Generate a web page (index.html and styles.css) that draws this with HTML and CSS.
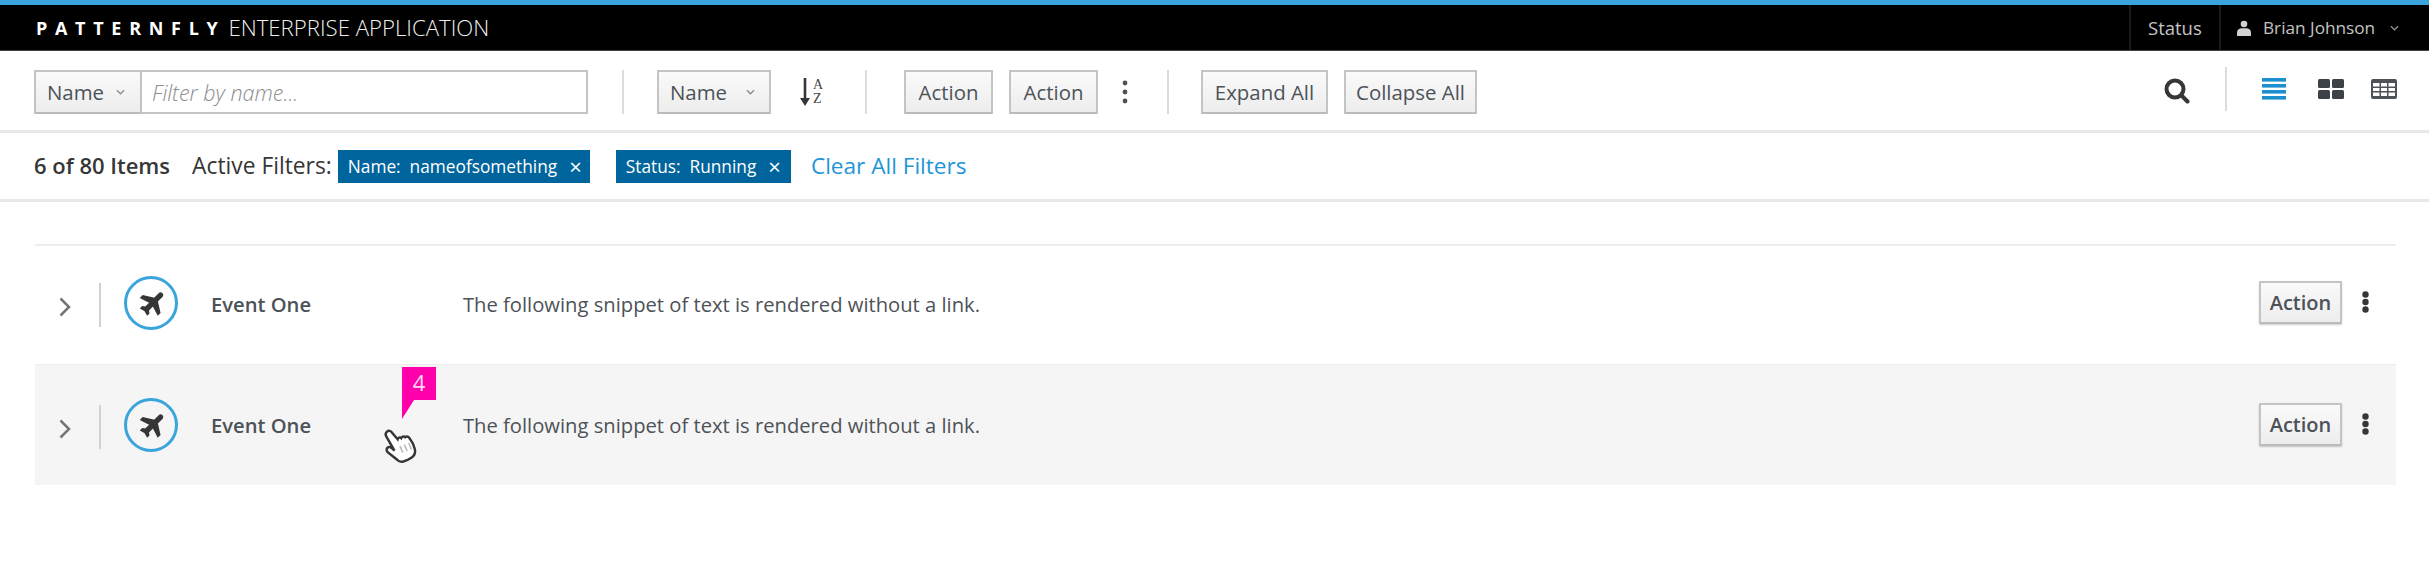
FILE: index.html
```html
<!DOCTYPE html>
<html lang="en">
<head>
<meta charset="utf-8">
<title>Patternfly Enterprise Application</title>
<link rel="stylesheet" href="styles.css">
</head>
<body>
<header class="masthead">
  <div class="brand"><span class="brand-name">PATTERNFLY</span><span class="brand-app">ENTERPRISE APPLICATION</span></div>
  <nav class="util">
    <span class="util-status">Status</span>
    <span class="util-user">
      <svg class="user-icon" viewBox="0 0 14 16"><circle cx="7" cy="4" r="3.300"/><path d="M0 16v-3.500C0 10 2 8.500 4 8.200h6c2 .3 4 1.800 4 4.300V16z"/></svg>
      <span class="user-name">Brian Johnson</span>
      <svg class="chev-down chev-light" viewBox="0 0 10 6"><path d="M1 1l4 4 4-4"/></svg>
    </span>
  </nav>
</header>

<section class="toolbar">
  <div class="filter-group">
    <button class="btn select-btn"><span>Name</span><svg class="chev-down" viewBox="0 0 10 6"><path d="M1 1l4 4 4-4"/></svg></button>
    <input class="filter-input" type="text" placeholder="Filter by name...">
  </div>
  <i class="sep sep-a"></i>
  <button class="btn select-btn sort-select"><span>Name</span><svg class="chev-down" viewBox="0 0 10 6"><path d="M1 1l4 4 4-4"/></svg></button>
  <span class="sort-icon">
    <svg class="sort-arrow" viewBox="0 0 10 28"><path d="M3.700 0h2.600v20H10l-5 8-5-8h3.700z"/></svg>
    <span class="sort-letters"><span>A</span><span>Z</span></span>
  </span>
  <i class="sep sep-b"></i>
  <button class="btn action w-action">Action</button>
  <button class="btn action w-action action-2">Action</button>
  <svg class="kebab kebab-bar" viewBox="0 0 6 24"><circle cx="3" cy="3" r="2.400"/><circle cx="3" cy="12" r="2.400"/><circle cx="3" cy="21" r="2.400"/></svg>
  <i class="sep sep-c"></i>
  <button class="btn action w-expand">Expand All</button>
  <button class="btn action w-collapse action-2">Collapse All</button>
  <div class="toolbar-right">
    <svg class="search-icon" viewBox="0 0 26 26"><circle cx="11" cy="11" r="8.500"/><path d="M17.500 17.500l6 6"/></svg>
    <i class="sep sep-d"></i>
    <svg class="view-icon view-list" viewBox="0 0 24 22"><rect y="0" width="24" height="3.600"/><rect y="6" width="24" height="3.600"/><rect y="12" width="24" height="3.600"/><rect y="18" width="24" height="3.600"/></svg>
    <svg class="view-icon view-grid" viewBox="0 0 26 20"><rect width="12" height="9" rx="1.500"/><rect x="14" width="12" height="9" rx="1.500"/><rect y="11" width="12" height="9" rx="1.500"/><rect x="14" y="11" width="12" height="9" rx="1.500"/></svg>
    <svg class="view-icon view-table" viewBox="0 0 26 20"><path fill-rule="evenodd" d="M2 0h22a2 2 0 0 1 2 2v16a2 2 0 0 1-2 2H2a2 2 0 0 1-2-2V2a2 2 0 0 1 2-2zm0 4v3.500h6.500V4zm8 0v3.500h6V4zm7.500 0v3.500H24V4zM2 9v3h6.500V9zm8 0v3h6V9zm7.500 0v3H24V9zM2 13.500V17h6.500v-3.500zm8 0V17h6v-3.500zm7.500 0V17H24v-3.500z"/></svg>
  </div>
</section>

<section class="filters">
  <strong class="count">6 of 80 Items</strong>
  <span class="active-label">Active Filters:</span>
  <span class="chip chip-1">Name:&nbsp; nameofsomething<b class="chip-x">×</b></span>
  <span class="chip chip-2">Status:&nbsp; Running<b class="chip-x">×</b></span>
  <a class="clear" href="#">Clear All Filters</a>
</section>

<main class="list">
  <div class="row row-first">
    <svg class="chev-right" viewBox="0 0 12 20"><path d="M1.500 1.500L10 10l-8.500 8.500"/></svg>
    <i class="row-sep"></i>
    <span class="plane-circle"><svg class="plane" viewBox="-2 0 24 24"><path transform="rotate(45 12 12)" d="M21 16v-2l-8-5V3.500c0-.83-.67-1.500-1.500-1.500S10 2.670 10 3.500V9l-8 5v2l8-2.500V19l-2 1.500V22l3.500-1 3.500 1v-1.500L13 19v-5.500l8 2.500z"/></svg></span>
    <span class="row-title">Event One</span>
    <span class="row-text">The following snippet of text is rendered without a link.</span>
    <button class="btn row-action">Action</button>
    <svg class="kebab kebab-row" viewBox="0 0 7 22"><circle cx="3.500" cy="3.500" r="3.200"/><circle cx="3.500" cy="11" r="3.200"/><circle cx="3.500" cy="18.500" r="3.200"/></svg>
  </div>
  <div class="row row-hover">
    <svg class="chev-right" viewBox="0 0 12 20"><path d="M1.500 1.500L10 10l-8.500 8.500"/></svg>
    <i class="row-sep"></i>
    <span class="plane-circle"><svg class="plane" viewBox="-2 0 24 24"><path transform="rotate(45 12 12)" d="M21 16v-2l-8-5V3.500c0-.83-.67-1.500-1.500-1.500S10 2.670 10 3.500V9l-8 5v2l8-2.500V19l-2 1.500V22l3.500-1 3.500 1v-1.500L13 19v-5.500l8 2.500z"/></svg></span>
    <span class="row-title">Event One</span>
    <span class="row-text">The following snippet of text is rendered without a link.</span>
    <button class="btn row-action">Action</button>
    <svg class="kebab kebab-row" viewBox="0 0 7 22"><circle cx="3.500" cy="3.500" r="3.200"/><circle cx="3.500" cy="11" r="3.200"/><circle cx="3.500" cy="18.500" r="3.200"/></svg>
    <span class="marker"><span class="marker-num">4</span></span>
    <svg class="hand" viewBox="0 0 34 34"><path d="M6.500 3.200c1.700-1.200 3.500-.4 4.500 1.300l4.400 6.300c.5-1.400 2.300-1.900 3.300-.8.600-1.200 2.500-1.600 3.500-.4.900-.9 2.700-.8 3.500.5 2 3 3.800 7.200 4.300 11 .4 3.400-.8 5.700-3.800 7.300-2.500 1.400-5.100 2.300-7.500 2.700-2.300.3-4-.4-5.300-2.100L5.500 21.500c-1.100-1.500-.9-3.100.2-3.900 1.200-.8 2.800-.4 4 .9l2 2.200L5.600 7.600c-.8-1.700-.5-3.400.9-4.400z"/><path class="hand-lines" d="M17 17l2 6M21 16l2 6M25 15l2 6"/></svg>
  </div>
</main>
</body>
</html>
```

FILE: styles.css
```css
* { box-sizing: border-box; }
html, body { margin: 0; padding: 0; }
body {
  width: 2429px;
  height: 575px;
  background: #fff;
  color: #363636;
  font-family: "Open Sans", "Liberation Sans", sans-serif;
  font-size: 20.200px;
  overflow: hidden;
}
i { display: block; font-style: normal; }

/* masthead */
.masthead {
  height: 51px;
  background: #000;
  border-top: 5px solid #39a5dc;
  border-bottom: 1px solid #444;
  display: flex;
  justify-content: space-between;
  color: #c4c4c4;
}
.brand { display: flex; align-items: center; padding-left: 36px; }
.brand-name { font-weight: 700; font-size: 18px; letter-spacing: 7.700px; color: #fff; }
.brand-app { margin-left: 3px; font-size: 22.200px; font-weight: 300; color: #f0f0f0; }
.util { display: flex; font-size: 18.500px; }
.util-status {
  width: 92px;
  border-left: 2px solid #1a1a1a;
  border-right: 2px solid #1a1a1a;
  display: flex;
  align-items: center;
  padding-left: 17px;
}
.util-user { width: 208px; display: flex; align-items: center; padding-left: 16px; }
.user-icon { width: 14px; height: 16px; fill: #d1d1d1; }
.user-name { margin-left: 12px; font-size: 17.200px; }
.chev-light { margin-left: 15px; }

/* toolbar */
.toolbar {
  height: 82px;
  border-bottom: 3px solid #e8e8e8;
  display: flex;
  align-items: center;
  padding: 3px 32px 0 34px;
}
.btn {
  height: 44px;
  font-family: inherit;
  font-size: 20.400px;
  color: #4d5258;
  background: linear-gradient(#fafafa, #ededed);
  border: 2px solid #c4c4c4;
  border-bottom-color: #bbb;
  border-radius: 1px;
  padding: 0;
  display: inline-flex;
  align-items: center;
  justify-content: center;
  flex: none;
}
.filter-group { display: flex; width: 554px; height: 44px; }
.select-btn { width: 108px; justify-content: flex-start; padding-left: 11px; }
.select-btn span { width: 69px; text-align: left; }
.chev-down { width: 9px; height: 6px; fill: none; stroke: #8b8d8f; stroke-width: 1.500; }
.filter-input {
  flex: 1;
  min-width: 0;
  border: 2px solid #c4c4c4;
  border-left: 0;
  padding: 0 10px;
  font-family: inherit;
  font-size: 21.500px;
  font-style: italic;
  font-weight: 300;
  outline: 0;
}
.filter-input::placeholder { color: #8b8d8f; opacity: 1; }
.sep { width: 2px; height: 44px; background: #dcdcdc; flex: none; }
.sep-a { margin-left: 34px; margin-right: 33px; }
.sort-select { width: 114px; padding-left: 11px; }
.sort-select span { width: 76px; }
.sort-icon { display: flex; align-items: center; margin-left: 29px; width: 65px; }
.sort-arrow { width: 10px; height: 28px; fill: #363636; }
.sort-letters {
  display: flex;
  flex-direction: column;
  margin-left: 3px;
  font-family: "Liberation Serif", serif;
  font-size: 14px;
  line-height: 14px;
  color: #444;
}
.sep-b { margin-right: 37px; }
.w-action { width: 89px; }
.w-expand { width: 127px; }
.w-collapse { width: 133px; }
.action-2 { margin-left: 16px; }
.kebab { fill: #4d5258; flex: none; }
.kebab-bar { width: 6px; height: 24px; margin-left: 24px; }
.sep-c { margin-left: 39px; margin-right: 32px; }
.toolbar-right { display: flex; align-items: center; margin-left: auto; margin-bottom: 7px; }
.search-icon { width: 26px; height: 26px; margin-top: 4px; fill: none; stroke: #363636; stroke-width: 4; stroke-linecap: round; }
.sep-d { margin-left: 35px; margin-right: 35px; }
.view-icon { flex: none; }
.view-list { width: 24px; height: 22px; fill: #1d8fce; }
.view-grid { width: 26px; height: 20px; margin-left: 32px; fill: #3d4248; }
.view-table { width: 26px; height: 20px; margin-left: 27px; fill: #4d5258; }

/* filter row */
.filters {
  height: 69px;
  border-bottom: 3px solid #e8e8e8;
  display: flex;
  align-items: center;
  padding: 0 0 0 34px;
  color: #363636;
  font-size: 22px;
}
.count { font-weight: 600; margin-bottom: 2px; }
.active-label { margin-left: 22px; font-size: 22.800px; margin-bottom: 2px; }
.chip {
  height: 33px;
  background: #00659c;
  color: #fff;
  font-size: 17.300px;
  display: inline-flex;
  align-items: center;
  padding: 0 10px;
  white-space: nowrap;
}
.chip-1 { margin-left: 6px; padding-right: 8px; }
.chip-2 { margin-left: 26px; }
.chip-x { margin-left: 12px; font-weight: 400; font-size: 22px; line-height: 1; }
.clear { margin-left: 20px; color: #1d96d8; text-decoration: none; font-size: 22.600px; margin-bottom: 2px; }

/* list */
.list { margin: 42px 33px 0 35px; border-top: 2px solid #ededed; }
.row { position: relative; display: flex; align-items: center; height: 121px; padding-left: 24px; }
.row-first { height: 118px; padding-bottom: 4px; }
.row-hover { background: #f5f5f5; border-top: 1px solid #ededed; }
.chev-right { width: 12px; height: 20px; margin-top: 8px; fill: none; stroke: #72767b; stroke-width: 2.500; flex: none; }
.row-sep { width: 2px; height: 44px; background: #d1d1d1; margin-left: 28px; margin-top: 4px; }
.plane-circle {
  width: 54px;
  height: 54px;
  margin-left: 23px;
  border: 3.500px solid #39a5dc;
  border-radius: 50%;
  display: flex;
  align-items: center;
  justify-content: center;
  flex: none;
}
.plane { width: 30px; height: 30px; fill: #363636; stroke: #363636; stroke-width: 1.300; }
.row-title { margin-left: 33px; width: 252px; margin-top: 2px; font-weight: 600; color: #4d5258; flex: none; }
.row-text { color: #4d5258; margin-top: 2px; }
.row-hover .row-title, .row-hover .row-text { margin-top: 0; }
.row-action { margin-left: auto; margin-bottom: 2px; width: 83px; height: 43px; font-size: 20px; font-weight: 600; box-shadow: 0 1px 2px rgba(0,0,0,.2); }
.kebab-row { width: 7px; height: 22px; margin-left: 20px; margin-right: 27px; margin-bottom: 2px; fill: #363636; }
.marker {
  position: absolute;
  left: 367px;
  top: 2px;
  width: 34px;
  height: 52px;
  background: #ff00aa;
  clip-path: polygon(0 0, 100% 0, 100% 33px, 12px 33px, 0 52px);
  color: #fff;
  text-align: center;
}
.marker-num { display: block; font-size: 22px; line-height: 31px; opacity: .85; }
.hand {
  position: absolute;
  left: 346px;
  top: 62px;
  width: 38px;
  height: 38px;
  fill: #fff;
  stroke: #363636;
  stroke-width: 2.200;
  transform: rotate(-5deg);
}
.hand-lines { stroke: #bbb; stroke-width: 1.500; fill: none; }
```
